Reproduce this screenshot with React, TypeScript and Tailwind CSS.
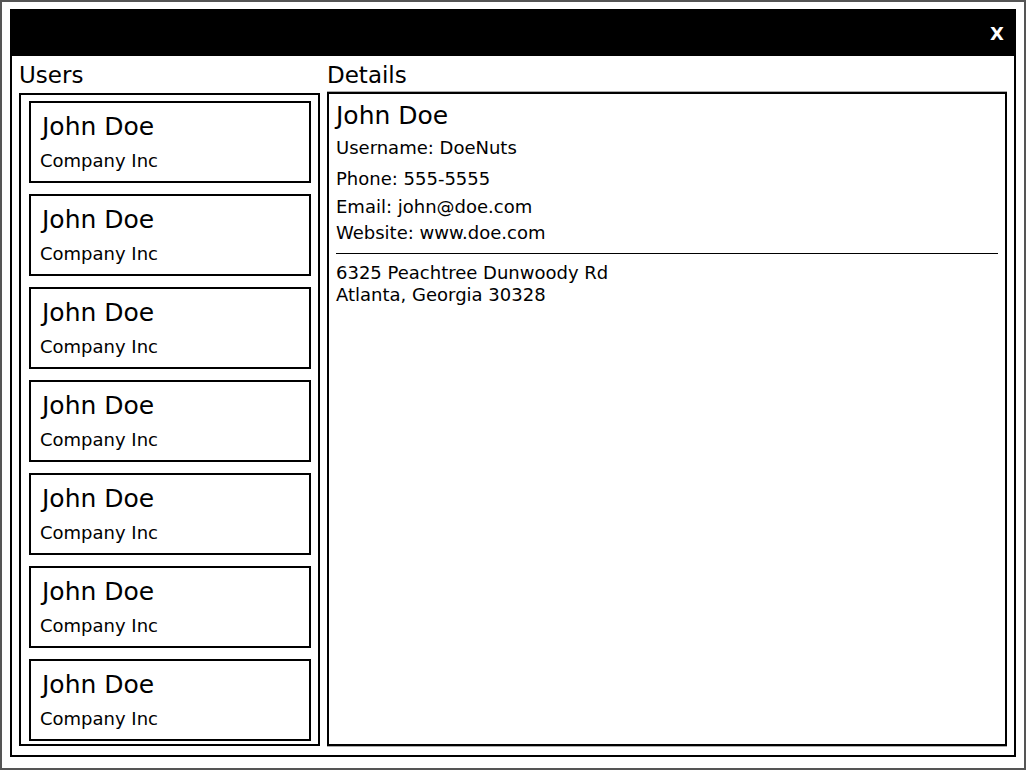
const users = Array.from({ length: 7 }, () => ({ name: "John Doe", company: "Company Inc" }));

export default function App() {
  return (
    <div
      className="w-[1026px] h-[770px] border-2 border-[#555] bg-white pl-[8px] pt-[7px] text-black"
      style={{ fontFamily: '"DejaVu Sans", Verdana, sans-serif' }}
    >
      <div className="w-[1006px] h-[748px] border-2 border-black flex flex-col">
        {/* Title bar */}
        <div className="h-[45px] bg-black flex items-center justify-end pr-[10px]">
          <button className="text-white text-[18px] font-bold leading-none">X</button>
        </div>

        <div className="flex pl-[7px] pr-[7px] gap-[7px]">
          {/* Users column */}
          <div className="w-[301px] flex flex-col">
            <div className="text-[23px] leading-[27px] mt-[6px] mb-[4px]">Users</div>
            <div className="h-[653px] border-2 border-black pt-[6px] pl-[8px] pr-[7px] flex flex-col gap-[11px]">
              {users.map((u, i) => (
                <div key={i} className="h-[82px] shrink-0 border-2 border-black pt-[10px] pl-[9px]">
                  <div className="text-[25px] leading-[28px] pl-[2px]">{u.name}</div>
                  <div className="text-[18px] leading-[21px] mt-[9px]">{u.company}</div>
                </div>
              ))}
            </div>
          </div>

          {/* Details column */}
          <div className="w-[680px] flex flex-col">
            <div className="text-[23px] leading-[27px] mt-[6px] mb-[3px]">Details</div>
            <div className="h-[654px] border-2 border-black shadow-[0_1px_0_#aaa,0_-1px_0_#aaa] pl-[7px] pr-[7px]">
              <div className="text-[25px] leading-[28px] mt-[8px]">John Doe</div>
              <div className="text-[18px] leading-[24px] mt-[6px]">Username: DoeNuts</div>
              <div className="text-[18px] leading-[24px] mt-[7px]">Phone: 555-5555</div>
              <div className="text-[18px] leading-[24px] mt-[4px]">Email: john@doe.com</div>
              <div className="text-[18px] leading-[24px] mt-[2px]">Website: www.doe.com</div>
              <div className="h-px bg-black mt-[8px]" />
              <div className="text-[18px] leading-[22px] mt-[8px]">
                <div>6325 Peachtree Dunwoody Rd</div>
                <div>Atlanta, Georgia 30328</div>
              </div>
            </div>
          </div>
        </div>
      </div>
    </div>
  );
}
